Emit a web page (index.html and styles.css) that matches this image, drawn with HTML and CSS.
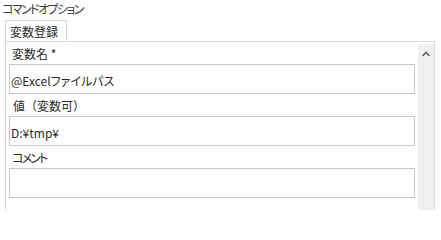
FILE: index.html
```html
<!DOCTYPE html>
<html lang="ja">
<head>
<meta charset="utf-8">
<link rel="stylesheet" href="styles.css">
</head>
<body>
<div class="title">コマンドオプション</div>
<div class="tabs">
  <div class="tab">変数登録</div>
</div>
<div class="panel">
  <div class="content">
    <div class="label">変数名 *</div>
    <div class="field">@Excelファイルパス</div>
    <div class="label label-wide">値（変数可）</div>
    <div class="field">D:¥tmp¥</div>
    <div class="label label-kana">コメント</div>
    <div class="field"></div>
  </div>
  <div class="scrollbar">
    <svg class="arrow" width="16" height="16" viewBox="0 0 16 16">
      <polyline points="4.5,10 8,6.5 11.5,10" fill="none" stroke="#606060" stroke-width="1.6"/>
    </svg>
  </div>
</div>
</body>
</html>
```
FILE: styles.css
```css
html, body {
  margin: 0;
  padding: 0;
  background: #ffffff;
  width: 441px;
  height: 210px;
  overflow: hidden;
}
body {
  font-family: "Noto Sans CJK JP", "Noto Sans", sans-serif;
  font-size: 12px;
  color: #2a2a2a;
  font-feature-settings: "palt";
}
.title {
  height: 20px;
  line-height: 17px;
  padding-left: 2px;
  color: #3a3a3a;
  letter-spacing: -1.6px;
}
.tabs {
  display: flex;
  margin-left: 5px;
}
.tab {
  box-sizing: border-box;
  width: 62px;
  height: 21px;
  border: 1px solid #d9d9d9;
  border-bottom: none;
  padding-left: 4px;
  line-height: 21px;
  background: #ffffff;
}
.panel {
  box-sizing: border-box;
  margin-left: 5px;
  width: 430px;
  height: 169px;
  border: 1px solid #d9d9d9;
  border-bottom: none;
  display: flex;
}
.content {
  flex: 1;
  padding-left: 3px;
  padding-right: 3px;
}
.label {
  height: 22px;
  line-height: 23px;
  padding-left: 3px;
}
.label-wide {
  font-feature-settings: normal;
  padding-left: 4px;
}
.label-kana {
  letter-spacing: -1.8px;
}
.field {
  box-sizing: border-box;
  height: 30px;
  border: 1px solid #c8c8c8;
  padding-left: 1px;
  line-height: 29px;
  padding-top: 1px;
}
.scrollbar {
  width: 16px;
  margin-top: 2px;
  background: #f0f0f0;
}
.arrow {
  display: block;
  margin-top: 2px;
}
```
